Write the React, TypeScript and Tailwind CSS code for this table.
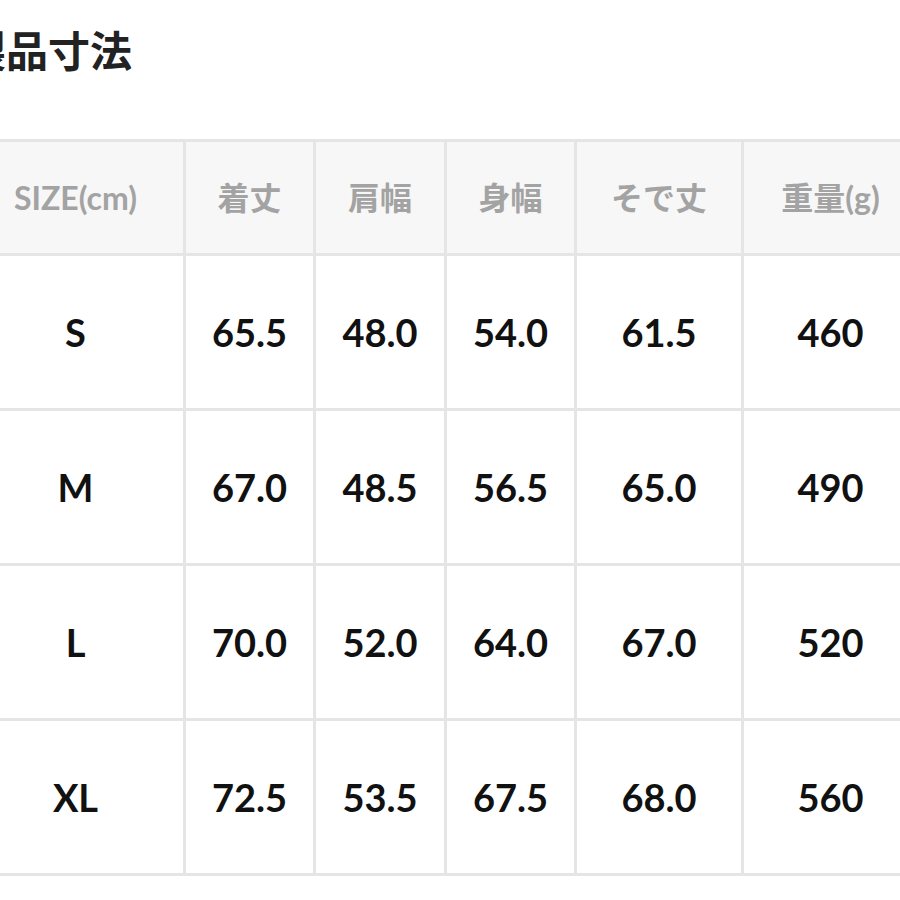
const headers = ["SIZE(cm)", "着丈", "肩幅", "身幅", "そで丈", "重量(g)"];

const rows: string[][] = [
  ["S", "65.5", "48.0", "54.0", "61.5", "460"],
  ["M", "67.0", "48.5", "56.5", "65.0", "490"],
  ["L", "70.0", "52.0", "64.0", "67.0", "520"],
  ["XL", "72.5", "53.5", "67.5", "68.0", "560"],
];

export default function App() {
  return (
    <div
      className="w-[900px] h-[900px] overflow-hidden bg-white"
      style={{ fontFamily: 'Lato, "Noto Sans CJK JP", sans-serif' }}
    >
      <h1 className="ml-[-36px] mt-[30px] text-[42px] leading-none font-bold text-[#222]">
        製品寸法
      </h1>
      <div className="ml-[-35px] mt-[67px] w-[955px] grid grid-cols-[215px_127px_128px_127px_164px_173px] grid-rows-[111px_152px_152px_152px_152px] gap-[3px] border-[3px] border-[#e5e5e5] bg-[#e5e5e5]">
        {headers.map((h, k) => (
          <div
            key={`h_${k}`}
            className="bg-[#f7f7f7] flex items-center justify-center text-[32px] font-bold text-[#a3a3a3]"
          >
            {h}
          </div>
        ))}
        {rows.map((row, i) =>
          row.map((cell, k) => (
            <div
              key={`c_${i}_${k}`}
              className="bg-white flex items-center justify-center text-[38px] font-bold text-[#111]"
            >
              {cell}
            </div>
          ))
        )}
      </div>
    </div>
  );
}
